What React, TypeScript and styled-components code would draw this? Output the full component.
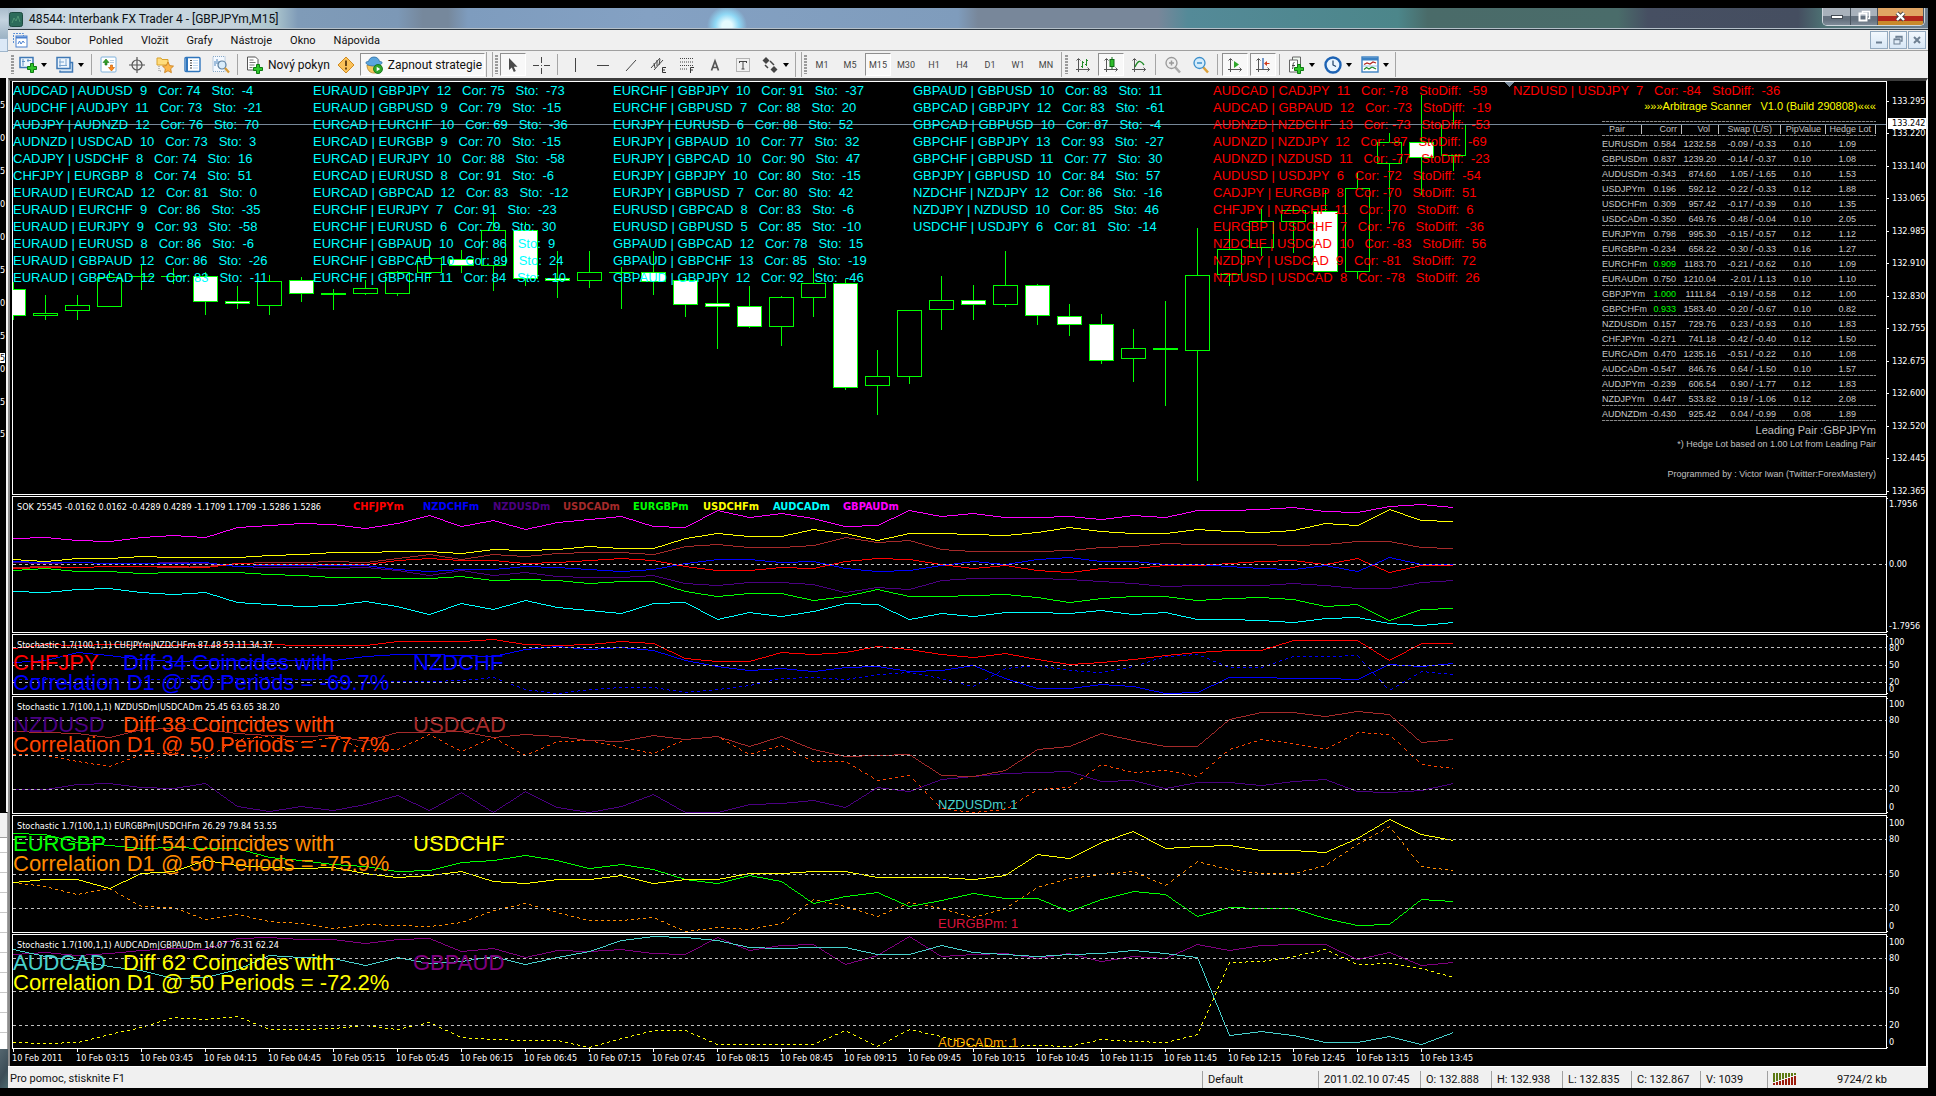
import React from "react";
import styled, { createGlobalStyle, css } from "styled-components";

const UI = `Roboto, "Open Sans", sans-serif`;
const ARIAL = `"Liberation Sans", Arial, sans-serif`;
const TAHOMA = `"DejaVu Sans Condensed", "DejaVu Sans", sans-serif`;

const GlobalStyle = createGlobalStyle`
  * { box-sizing: border-box; }
  html, body { margin: 0; padding: 0; background: #000; }
  button { font: inherit; color: inherit; margin: 0; padding: 0; border: 0; background: none; }
  svg { display: block; }
`;

/* ---------- frame ---------- */

const Desktop = styled.div`
  display: flex;
  height: 100vh;
  min-height: 700px;
  padding: 8px 8px 8px 0;
  background: #000;
  overflow: hidden;
  font: 11px/14px ${UI};
  color: #111;
`;

const Neighbour = styled.div`
  flex: none;
  width: 8px;
  display: flex;
  flex-direction: column;
  overflow: hidden;
  background: #f0f0f0;
`;

const NeighbourCaption = styled.div`
  height: 30px;
  background: linear-gradient(#a9bccb, #c4d3df 40%, #9db3c4);
`;

const NeighbourButton = styled.div`
  height: 14px;
  border: solid #9fb6cc;
  border-width: 1px 1px 1px 0;
  background: #dce9f7;
`;

const NeighbourBar = styled.div`
  height: 26px;
  background: #f0f0f0;
`;

const NeighbourScale = styled.div`
  position: relative;
  flex: 1;
  border-right: 2px solid #f4f4f4;
  background: #000;
  color: #fff;
  font: 9px/10px ${TAHOMA};
`;

const NeighbourDigit = styled.span<{ $y: number; $lit?: boolean }>`
  position: absolute;
  left: 0;
  top: ${(p) => p.$y}px;
  width: 5px;
  background: ${(p) => (p.$lit ? "#fff" : "transparent")};
  color: ${(p) => (p.$lit ? "#000" : "#fff")};
`;

const NeighbourList = styled.div`
  height: 237px;
  border-top: 1px solid #000;
  border-right: 1px solid #a0a0a0;
  background: linear-gradient(#f0f0f0 24px, #a0a0a0 24px 25px, transparent 25px),
    repeating-linear-gradient(#fff 0 19px, #c8c8c8 19px 20px);
`;

const NeighbourCorner = styled.div`
  height: 39px;
  background: linear-gradient(120deg, #54666f, #3b4d57 60%, #4c6b70);
`;

const Window = styled.main`
  flex: 1;
  min-width: 0;
  display: flex;
  flex-direction: column;
`;

/* ---------- caption ---------- */

const Caption = styled.header`
  flex: none;
  display: flex;
  align-items: flex-start;
  height: 22px;
  border-bottom: 1px solid #2e3a44;
  box-shadow: inset 0 -1px 0 #b5c0c9;
  background: radial-gradient(circle at 719px 18px, #e4fbff 0 5px, #8fd8f5 12px, transparent 20px),
    linear-gradient(
      90deg,
      #a9bccb 0,
      #cddbe3 40px,
      #c4d3dc 230px,
      #a9c3cc 268px,
      #7f9bb8 290px,
      #7c98b6 390px,
      #76889c 415px,
      #76889c 440px,
      #7e9cbe 460px,
      #84a1c3 640px,
      #7f9cbc 950px,
      #78879a 970px,
      #78879a 1150px,
      #548a98 1180px,
      #4c868a 1390px,
      #4a6b69 1420px,
      #4a6c6a 1610px,
      #464f62 1640px,
      #454e60 1790px,
      #4d7173 1815px,
      #6d7f90 100%
    );
`;

const AppIcon = styled.svg`
  margin: 4px 6px 0 1px;
`;

const Title = styled.h1`
  flex: 1;
  margin: 0;
  padding-top: 4px;
  font: 400 12px/14px ${UI};
  color: #0b1014;
`;

const CaptionButtons = styled.div`
  display: flex;
  margin-right: 3px;
  height: 18px;
  border: solid #cfd6dc;
  border-width: 0 1px 1px;
  border-radius: 0 0 5px 5px;
  overflow: hidden;
`;

const CaptionButton = styled.button<{ $width: number; $close?: boolean }>`
  width: ${(p) => p.$width}px;
  display: grid;
  place-items: center;
  border-right: 1px solid #49545f;
  background: ${(p) =>
    p.$close
      ? "linear-gradient(#e0a564 0 45%, #b3251c 45% 75%, #c98a2c 75%)"
      : "linear-gradient(#a8b1bb 0 45%, #66727f 45% 70%, #7f8b98)"};
`;

/* ---------- menu ---------- */

const MenuBar = styled.nav`
  flex: none;
  display: flex;
  align-items: center;
  height: 21px;
  padding: 0 2px 0 4px;
  border-bottom: 1px solid #a0a0a0;
  background: #f0f0f0;
`;

const MenuItems = styled.div`
  flex: 1;
  display: flex;
  gap: 18px;
  margin-left: 8px;
  padding-top: 1px;
`;

const MdiButtons = styled.div`
  display: flex;
  gap: 1px;
`;

const MdiButton = styled.button`
  width: 18px;
  height: 18px;
  display: grid;
  place-items: center;
  border: 1px solid #93a9bf;
  background: linear-gradient(#f2f8fe, #d8e7f6);
`;

/* ---------- toolbar ---------- */

const ToolBar = styled.div`
  flex: none;
  display: flex;
  align-items: center;
  height: 27px;
  padding-left: 3px;
  background: #f0f0f0;
`;

const Grip = styled.span<{ $lead?: boolean }>`
  flex: none;
  width: 3px;
  height: 19px;
  margin: 0 1px 0 ${(p) => (p.$lead ? 0 : 2)}px;
  background: repeating-linear-gradient(#9a9a9a 0 2px, transparent 2px 3px);
`;

const Divider = styled.span`
  flex: none;
  width: 1px;
  height: 21px;
  margin: 0 3px 0 2px;
  background: #a5a5a5;
`;

const BandEnd = styled.span<{ $double?: boolean }>`
  flex: none;
  width: ${(p) => (p.$double ? 7 : 2)}px;
  height: 25px;
  margin-left: 1px;
  border: solid #a5a5a5;
  border-width: 0 ${(p) => (p.$double ? 1 : 0)}px 0 1px;
`;

const pressed = css`
  border: 1px solid;
  border-color: #8f8f8f #fff #fff #8f8f8f;
  background: #f8f8f8;
`;

const Tool = styled.button<{ $on?: boolean }>`
  flex: none;
  width: 26px;
  height: 23px;
  margin: 0 1px;
  display: grid;
  place-items: center;
  color: #444;
  font: 9px/12px ${UI};
  ${(p) => p.$on && pressed}
`;

const DropTool = styled.button`
  flex: none;
  width: 37px;
  height: 23px;
  display: flex;
  align-items: center;
  gap: 4px;
  padding-left: 4px;
`;

const LabelTool = styled.button<{ $on?: boolean }>`
  flex: none;
  height: 23px;
  display: flex;
  align-items: center;
  gap: 5px;
  padding: 0 2px 0 4px;
  font-size: 12px;
  ${(p) => p.$on && pressed}
`;

/* ---------- chart window ---------- */

const ChartWindow = styled.section`
  flex: 1;
  min-height: 0;
  display: flex;
  flex-direction: column;
  padding-left: 2px;
  border: solid;
  border-width: 3px 2px 0 2px;
  border-color: #3c3c3c #f4f4f4 #3c3c3c #8c8c8c;
  background: #000;
  color: #fff;
`;

const Panes = styled.div`
  flex: 1;
  min-height: 0;
  display: grid;
  gap: 1px;
  grid-template-rows: 414fr 137fr 61fr 118fr 118fr 115fr;
`;

const Pane = styled.div`
  min-height: 0;
  display: grid;
  grid-template-columns: minmax(0, 1fr) 39px;
`;

const Plot = styled.div`
  position: relative;
  min-height: 0;
  border: 1px solid #fff;
  overflow: hidden;
`;

const Drawing = styled.svg`
  position: absolute;
  inset: 0;
  width: 100%;
  height: 100%;
`;

const Scale = styled.div<{ $ends?: boolean }>`
  position: relative;
  font: 9px/10px ${TAHOMA};
  ${(p) =>
    p.$ends &&
    css`
      &::before,
      &::after {
        content: "";
        position: absolute;
        left: 0;
        top: 2px;
        width: 1px;
        height: 1px;
        background: #fff;
      }
      &::after {
        top: auto;
        bottom: 1px;
      }
    `}
`;

const ScaleLabel = styled.span<{ $y: number; $tick?: boolean }>`
  position: absolute;
  top: ${(p) => p.$y - 5}px;
  left: 0;
  padding-left: ${(p) => (p.$tick ? 5 : 2)}px;
  &::before {
    content: "";
    position: absolute;
    left: 0;
    top: 5px;
    width: ${(p) => (p.$tick ? 2 : 0)}px;
    height: 1px;
    background: #fff;
  }
`;

const BidLabel = styled.span`
  position: absolute;
  top: 37px;
  left: 1px;
  right: 0;
  padding-left: 4px;
  background: #fff;
  color: #000;
  line-height: 11px;
`;

const Times = styled.div`
  flex: none;
  display: flex;
  height: 17px;
  overflow: hidden;
  font: 9px/11px ${TAHOMA};
`;

const Time = styled.span`
  flex: none;
  width: 64px;
  padding-top: 4px;
  white-space: nowrap;
  background: linear-gradient(#fff, #fff) 1px 0 / 1px 3px no-repeat;
`;

const PairColumns = styled.div`
  position: absolute;
  inset: 0 auto auto 0;
  display: grid;
  grid-auto-flow: column;
  grid-auto-columns: 300px;
  font: 13px/17px ${ARIAL};
  white-space: pre;
`;

const PairColumn = styled.div<{ $color: string }>`
  color: ${(p) => p.$color};
`;

const Scanner = styled.aside`
  position: absolute;
  top: 16px;
  right: 10px;
  width: 280px;
  color: #c0c0c0;
  font: 9px/14px ${ARIAL};
  text-align: right;
`;

const ScannerTitle = styled.h2`
  margin: 0 0 6px;
  font: 400 11px/17px ${ARIAL};
  color: #ff0;
  white-space: pre;
`;

const dashes = `repeating-linear-gradient(90deg, #8a8a8a 0 3px, #222 3px 4px)`;

const ScannerTable = styled.table`
  width: 274px;
  margin-left: auto;
  border-collapse: collapse;
  table-layout: fixed;
  background: ${dashes} top / 100% 1px no-repeat;
  th,
  td {
    height: 15px;
    padding: 0;
    font: 9px/14px ${ARIAL};
    white-space: nowrap;
    text-align: right;
  }
  tr {
    background: ${dashes} bottom / 100% 1px no-repeat;
  }
`;

const Col = styled.col<{ $w: number }>`
  width: ${(p) => p.$w}px;
`;

const Head = styled.th<{ $pad: number }>`
  && {
    padding-right: ${(p) => p.$pad}px;
  }
  position: relative;
  &::after {
    content: "";
    position: absolute;
    right: 0;
    top: 4px;
    width: 1px;
    height: 9px;
    background: #c0c0c0;
  }
`;

const Cell = styled.td<{ $pad?: number; $high?: boolean }>`
  && {
    padding-right: ${(p) => p.$pad ?? 0}px;
    color: ${(p) => (p.$high ? "#00ff00" : "#c8c8c8")};
  }
`;

const Leading = styled.p`
  margin: 2px 0 0;
  font: 11px/14px ${ARIAL};
`;

const Note = styled.p<{ $far?: boolean }>`
  margin: ${(p) => (p.$far ? 16 : 0)}px 0 0;
  white-space: nowrap;
`;

const PaneCaption = styled.div`
  position: absolute;
  left: 4px;
  top: 5px;
  display: flex;
  font: 9px/11px ${TAHOMA};
  white-space: nowrap;
`;

const Legend = styled.div`
  position: absolute;
  left: 340px;
  top: 3px;
  display: grid;
  grid-auto-flow: column;
  grid-auto-columns: 70px;
  font: bold 11px/13px ${TAHOMA};
`;

const Ink = styled.span<{ $color: string }>`
  color: ${(p) => p.$color};
`;

const Signal = styled.div`
  position: absolute;
  left: 0;
  top: 18px;
  display: grid;
  grid-template-columns: 110px 290px auto;
  font: 22px/20px ${ARIAL};
  white-space: nowrap;
`;

const SignalLine = styled.span<{ $color: string }>`
  grid-column: 1 / -1;
  color: ${(p) => p.$color};
`;

const Count = styled.span<{ $color: string }>`
  position: absolute;
  left: 925px;
  top: 100px;
  font: 13px/16px ${ARIAL};
  color: ${(p) => p.$color};
`;

/* ---------- status bar ---------- */

const StatusBar = styled.footer`
  flex: none;
  display: flex;
  align-items: center;
  height: 22px;
  padding: 3px 0 0 2px;
  background: #f0f0f0;
  border-top: 1px solid #fff;
`;

const StatusText = styled.span`
  flex: 1;
`;

const StatusCell = styled.span<{ $w: number }>`
  flex: none;
  width: ${(p) => p.$w}px;
  padding-left: 5px;
  border-left: 1px solid #a0a0a0;
  line-height: 17px;
`;

const Traffic = styled.span`
  flex: none;
  display: flex;
  align-items: center;
  justify-content: space-between;
  width: 161px;
  padding: 0 41px 0 5px;
  border-left: 1px solid #a0a0a0;
  line-height: 17px;
`;

/* ---------- data ---------- */

const BAR = 32;

// Ordinates below are kept at three units per pixel; `origin` is the ordinate of the pane's top edge.
const toPixel = (v: number, origin: number) => Math.floor((v - origin) / 3);

// Walks the line pixel by pixel and joins neighbours of equal height into horizontal runs.
const trace = (data: number[], origin: number, dotted?: boolean) => {
  const ys = data.map((v) => toPixel(v, origin));
  let path = "";
  let startX = 0;
  let endX = -1;
  let rowY = 0;
  let count = 0;
  const flush = () => {
    if (endX >= startX) path += `M${startX} ${rowY + 0.5}h${endX - startX + 1}`;
    endX = startX - 1;
  };
  for (let i = 0; i < ys.length - 1; i++) {
    const dy = ys[i + 1] - ys[i];
    const steps = Math.max(BAR, Math.abs(dy));
    for (let s = 0; s < steps; s++, count++) {
      const x = i * BAR + Math.round((s * BAR) / steps);
      const y = ys[i] + Math.round((s * dy) / steps);
      if (dotted && count % 6 >= 3) {
        flush();
        continue;
      }
      if (endX >= startX && y === rowY && x <= endX + 1) {
        endX = x;
      } else {
        flush();
        startX = x;
        endX = x;
        rowY = y;
      }
    }
  }
  flush();
  return path;
};

// body top, body bottom, wick top, wick bottom, filled
const candles: number[][] = [
  [628, 706, 608, 720, 1], [700, 707, 645, 720, 0], [676, 692, 645, 720, 0], [592, 680, 573, 680, 0],
  [590, 590, 552, 630, 0], [590, 590, 564, 612, 0], [590, 665, 577, 705, 1], [664, 671, 620, 687, 1],
  [604, 677, 587, 705, 0], [601, 641, 591, 666, 1], [640, 644, 627, 690, 0], [625, 641, 600, 645, 0],
  [577, 641, 573, 648, 0], [535, 577, 502, 606, 0], [538, 556, 510, 579, 1], [451, 556, 402, 633, 0],
  [451, 596, 427, 618, 1], [595, 602, 513, 655, 1], [577, 602, 513, 624, 0], [577, 577, 561, 687, 0],
  [577, 605, 513, 645, 1], [601, 674, 590, 711, 1], [670, 680, 600, 807, 1], [679, 740, 618, 744, 1],
  [652, 740, 648, 798, 0], [610, 653, 564, 711, 0], [610, 923, 598, 930, 1], [889, 916, 810, 1005, 0],
  [691, 889, 691, 912, 0], [661, 689, 588, 750, 0], [661, 674, 615, 720, 1], [616, 674, 513, 681, 0],
  [616, 707, 612, 735, 1], [709, 734, 672, 768, 1], [733, 842, 702, 852, 1], [805, 836, 747, 907, 0],
  [805, 808, 663, 978, 0], [586, 812, 444, 1203, 0], [508, 583, 446, 618, 0], [424, 502, 387, 528, 0],
  [391, 424, 375, 519, 0], [394, 574, 330, 574, 1], [325, 574, 280, 597, 0], [187, 250, 159, 432, 0],
  [187, 232, 45, 345, 1], [133, 226, 90, 273, 0],
];

const mirror = (s: number[], sum: number) => s.map((v) => sum - v);
const spread = (a: number[], b: number[], zero: number) => a.map((v, i) => zero - Math.abs(v - b[i]));

const gbpaud = [175,172,181,184,172,166,172,143,136,130,134,145,129,106,139,121,149,128,119,109,139,142,90,112,100,115,139,136,91,109,100,112,112,109,118,106,112,91,91,88,82,94,97,79,73,82];
const usdchf = [238,244,235,235,230,232,232,232,227,223,217,217,214,214,220,208,211,208,199,205,205,176,160,169,169,149,160,182,160,160,163,166,157,142,154,160,160,148,154,157,151,130,136,88,121,125];
const usdcad = [262,259,262,259,259,262,259,250,247,247,244,247,236,223,238,223,230,220,217,217,223,199,193,202,202,195,172,187,181,208,214,214,214,211,203,199,190,193,193,193,197,193,184,184,202,206];
const chfjpy = [265,262,262,259,259,259,262,250,253,253,253,253,241,235,241,241,250,247,241,235,241,259,271,271,262,265,244,235,238,254,265,256,271,277,265,265,256,256,250,244,241,253,235,278,257,256];

const s1a = [505,492,496,494,497,496,496,494,493,496,496,496,484,484,484,478,493,496,493,484,490,535,545,545,517,523,517,499,508,523,532,520,539,553,547,538,526,518,511,511,482,482,482,541,490,490];
const s1b = [547,541,517,526,538,543,540,540,543,540,540,529,523,523,526,529,508,499,508,503,511,541,559,571,565,574,562,559,574,571,556,596,625,625,613,620,640,637,592,592,595,595,599,553,559,550];
const s2a = [754,757,760,772,748,745,748,760,766,769,766,784,757,757,754,772,763,769,780,785,766,778,769,799,769,808,829,826,823,886,889,871,808,799,760,781,799,799,719,697,697,709,694,704,787,778];
const s2b = [928,928,913,910,922,925,910,978,995,979,991,972,946,992,937,997,934,982,997,979,943,997,997,973,970,961,982,922,934,898,889,880,877,875,904,901,925,907,907,916,904,898,934,937,931,910];
const s3a = [130,133,157,166,175,172,175,176,202,211,223,229,244,241,217,211,196,211,235,223,238,268,280,256,274,340,319,307,349,331,310,325,325,364,328,304,314,379,352,355,355,385,407,403,328,334];
const s3b = [277,268,268,296,250,244,211,226,232,234,232,250,262,256,244,274,280,268,268,256,280,268,268,250,250,244,244,262,262,262,268,256,193,205,157,124,175,169,166,181,181,187,145,88,133,151];
const s4a = [478,499,510,530,541,565,562,537,496,502,505,526,502,520,514,499,523,502,484,451,439,442,451,472,474,472,472,493,493,466,487,493,499,493,490,481,490,502,736,724,736,757,757,739,763,727];
const s4b = [493,487,496,490,480,475,478,445,442,448,448,460,448,445,484,475,502,481,484,478,490,493,442,481,466,463,523,496,439,499,493,490,504,490,514,499,505,463,481,466,463,463,508,487,526,517];

type Line = { color: string; data: number[]; dotted?: boolean };
type Mark = [string, number];

interface Study {
  name: string;
  caption: string;
  origin: number;
  levels: number[];
  lines: Line[];
  marks: Mark[];
  left?: [string, string];
  right?: [string, string];
  diff?: [string, string, string];
  count?: [string, string];
}

const studies: Study[] = [
  {
    name: "SOK",
    caption: "SOK 25545 -0.0162 0.0162 -0.4289 0.4289 -1.1709 1.1709 -1.5286 1.5286",
    origin: 51,
    levels: [253],
    lines: [
      { color: "#ff00ff", data: gbpaud },
      { color: "#00ffff", data: mirror(gbpaud, 509) },
      { color: "#ffff00", data: usdchf },
      { color: "#00ff00", data: mirror(usdchf, 509) },
      { color: "#4b0082", data: mirror(usdcad, 508) },
      { color: "#a52a2a", data: usdcad },
      { color: "#0000ff", data: mirror(chfjpy, 509) },
      { color: "#ff0000", data: chfjpy },
    ],
    marks: [["1.7956", 8], ["0.00", 68], ["-1.7956", 130]],
  },
  {
    name: "CHFJPY NZDCHF",
    caption: "Stochastic 1.7(100,1,1) CHFJPYm|NZDCHFm 87.48 53.11 34.37",
    origin: 465,
    levels: [502, 556, 607],
    lines: [
      { color: "#0000ff", data: spread(s1a, s1b, 642), dotted: true },
      { color: "#0000ff", data: s1b },
      { color: "#ff0000", data: s1a },
    ],
    marks: [["100", 8], ["80", 14], ["50", 31], ["20", 48], ["0", 55]],
    left: ["CHFJPY", "#ff0000"],
    right: ["NZDCHF", "#0000ff"],
    diff: ["Diff 34 Coincides with", "Correlation D1 @ 50 Periods = -69.7%", "#0000ff"],
  },
  {
    name: "NZDUSD USDCAD",
    caption: "Stochastic 1.7(100,1,1) NZDUSDm|USDCADm 25.45 63.65 38.20",
    origin: 651,
    levels: [721, 826, 928],
    lines: [
      { color: "#ff4500", data: spread(s2a, s2b, 997), dotted: true },
      { color: "#4b0082", data: s2b },
      { color: "#a52a2a", data: s2a },
    ],
    marks: [["100", 8], ["80", 24], ["50", 59], ["20", 93], ["0", 111]],
    left: ["NZDUSD", "#4b0082"],
    right: ["USDCAD", "#a52a2a"],
    diff: ["Diff 38 Coincides with", "Correlation D1 @ 50 Periods = -77.7%", "#ff4500"],
    count: ["NZDUSDm: 1", "#48d1cc"],
  },
  {
    name: "EURGBP USDCHF",
    caption: "Stochastic 1.7(100,1,1) EURGBPm|USDCHFm 26.29 79.84 53.55",
    origin: 78,
    levels: [148, 253, 355],
    lines: [
      { color: "#ff8c00", data: spread(s3a, s3b, 424), dotted: true },
      { color: "#00ff00", data: s3a },
      { color: "#ffff00", data: s3b },
    ],
    marks: [["100", 8], ["80", 24], ["50", 59], ["20", 93], ["0", 111]],
    left: ["EURGBP", "#00ff00"],
    right: ["USDCHF", "#ffff00"],
    diff: ["Diff 54 Coincides with", "Correlation D1 @ 50 Periods = -75.9%", "#ff8c00"],
    count: ["EURGBPm: 1", "#dc143c"],
  },
  {
    name: "AUDCAD GBPAUD",
    caption: "Stochastic 1.7(100,1,1) AUDCADm|GBPAUDm 14.07 76.31 62.24",
    origin: 435,
    levels: [505, 604, 706],
    lines: [
      { color: "#ffff00", data: spread(s4a, s4b, 772), dotted: true },
      { color: "#800080", data: s4b },
      { color: "#48d1cc", data: s4a },
    ],
    marks: [["100", 8], ["80", 24], ["50", 57], ["20", 91], ["0", 108]],
    left: ["AUDCAD", "#48d1cc"],
    right: ["GBPAUD", "#800080"],
    diff: ["Diff 62 Coincides with", "Correlation D1 @ 50 Periods = -72.2%", "#ffff00"],
    count: ["AUDCADm: 1", "#ffa500"],
  },
];

const legend: [string, string][] = [
  ["CHFJPYm", "#ff0000"], ["NZDCHFm", "#0000ff"], ["NZDUSDm", "#4b0082"], ["USDCADm", "#a52a2a"],
  ["EURGBPm", "#00ff00"], ["USDCHFm", "#ffff00"], ["AUDCADm", "#00ffff"], ["GBPAUDm", "#ff00ff"],
];

const prices: Mark[] = [
  ["133.295", 20], ["133.220", 52], ["133.140", 85], ["133.065", 117], ["132.985", 150], ["132.910", 182],
  ["132.830", 215], ["132.755", 247], ["132.675", 280], ["132.600", 312], ["132.520", 345], ["132.445", 377],
  ["132.365", 410],
];

// first symbol, second symbol, periods, correlation, stochastic
const matched: string[][] = [
  [
    "AUDCAD AUDUSD 9 74 -4", "AUDCHF AUDJPY 11 73 -21", "AUDJPY AUDNZD 12 76 70", "AUDNZD USDCAD 10 73 3",
    "CADJPY USDCHF 8 74 16", "CHFJPY EURGBP 8 74 51", "EURAUD EURCAD 12 81 0", "EURAUD EURCHF 9 86 -35",
    "EURAUD EURJPY 9 93 -58", "EURAUD EURUSD 8 86 -6", "EURAUD GBPAUD 12 86 -26", "EURAUD GBPCAD 12 83 -11",
  ],
  [
    "EURAUD GBPJPY 12 75 -73", "EURAUD GBPUSD 9 79 -15", "EURCAD EURCHF 10 69 -36", "EURCAD EURGBP 9 70 -15",
    "EURCAD EURJPY 10 88 -58", "EURCAD EURUSD 8 91 -6", "EURCAD GBPCAD 12 83 -12", "EURCHF EURJPY 7 91 -23",
    "EURCHF EURUSD 6 79 30", "EURCHF GBPAUD 10 86 9", "EURCHF GBPCAD 10 89 24", "EURCHF GBPCHF 11 84 -10",
  ],
  [
    "EURCHF GBPJPY 10 91 -37", "EURCHF GBPUSD 7 88 20", "EURJPY EURUSD 6 88 52", "EURJPY GBPAUD 10 77 32",
    "EURJPY GBPCAD 10 90 47", "EURJPY GBPJPY 10 80 -15", "EURJPY GBPUSD 7 80 42", "EURUSD GBPCAD 8 83 -6",
    "EURUSD GBPUSD 5 85 -10", "GBPAUD GBPCAD 12 78 15", "GBPAUD GBPCHF 13 85 -19", "GBPAUD GBPJPY 12 92 -46",
  ],
  [
    "GBPAUD GBPUSD 10 83 11", "GBPCAD GBPJPY 12 83 -61", "GBPCAD GBPUSD 10 87 -4", "GBPCHF GBPJPY 13 93 -27",
    "GBPCHF GBPUSD 11 77 30", "GBPJPY GBPUSD 10 84 57", "NZDCHF NZDJPY 12 86 -16", "NZDJPY NZDUSD 10 85 46",
    "USDCHF USDJPY 6 81 -14",
  ],
];

const opposed: string[][] = [
  [
    "AUDCAD CADJPY 11 -78 -59", "AUDCAD GBPAUD 12 -73 -19", "AUDNZD NZDCHF 13 -73 -53", "AUDNZD NZDJPY 12 -87 -69",
    "AUDNZD NZDUSD 11 -77 -23", "AUDUSD USDJPY 6 -72 -54", "CADJPY EURGBP 8 -70 51", "CHFJPY NZDCHF 11 -70 6",
    "EURGBP USDCHF 7 -76 -36", "NZDCHF USDCAD 10 -83 56", "NZDJPY USDCAD 9 -81 72", "NZDUSD USDCAD 8 -78 26",
  ],
  ["NZDUSD USDJPY 7 -84 -36"],
];

const scanner = [
  "EURUSDm,0.584,1232.58,-0.09 / -0.33,0.10,1.09", "GBPUSDm,0.837,1239.20,-0.14 / -0.37,0.10,1.08",
  "AUDUSDm,-0.343,874.60,1.05 / -1.65,0.10,1.53", "USDJPYm,0.196,592.12,-0.22 / -0.33,0.12,1.88",
  "USDCHFm,0.309,957.42,-0.17 / -0.39,0.10,1.35", "USDCADm,-0.350,649.76,-0.48 / -0.04,0.10,2.05",
  "EURJPYm,0.798,995.30,-0.15 / -0.57,0.12,1.12", "EURGBPm,-0.234,658.22,-0.30 / -0.33,0.16,1.27",
  "EURCHFm,0.909,1183.70,-0.21 / -0.62,0.10,1.09", "EURAUDm,0.750,1210.04,-2.01 / 1.13,0.10,1.10",
  "GBPJPYm,1.000,1111.84,-0.19 / -0.58,0.12,1.00", "GBPCHFm,0.933,1583.40,-0.20 / -0.67,0.10,0.82",
  "NZDUSDm,0.157,729.76,0.23 / -0.93,0.10,1.83", "CHFJPYm,-0.271,741.18,-0.42 / -0.40,0.12,1.50",
  "EURCADm,0.470,1235.16,-0.51 / -0.22,0.10,1.08", "AUDCADm,-0.547,846.76,0.64 / -1.50,0.10,1.57",
  "AUDJPYm,-0.239,606.54,0.90 / -1.77,0.12,1.83", "NZDJPYm,0.447,533.82,0.19 / -1.06,0.12,2.08",
  "AUDNZDm,-0.430,925.42,0.04 / -0.99,0.08,1.89",
].map((r) => r.split(","));

const times = ["10 Feb 2011"].concat(
  Array.from({ length: 22 }, (_, k) => {
    const m = 195 + k * 30;
    return `10 Feb ${String(Math.floor(m / 60)).padStart(2, "0")}:${String(m % 60).padStart(2, "0")}`;
  })
);

/* ---------- icons ---------- */

const Icon = ({ children, size = 18 }: { children: React.ReactNode; size?: number }) => (
  <svg width={size} height={size} viewBox="0 0 18 18" fill="none" aria-hidden="true">
    {children}
  </svg>
);

const Caret = () => (
  <svg width="6" height="4" viewBox="0 0 6 4" aria-hidden="true">
    <path d="M0 0h6L3 4z" fill="#000" />
  </svg>
);

const Plus = ({ x, y }: { x: number; y: number }) => (
  <path
    transform={`translate(${x} ${y})`}
    d="M3.5 .5h3v3h3v3h-3v3h-3v-3h-3v-3h3z"
    fill="#2fc52a"
    stroke="#0d7a12"
  />
);

const NewChart = () => (
  <Icon>
    <rect x="1" y="1.500" width="13" height="10" fill="#eef6fd" stroke="#3f78b5" strokeWidth="1.500" />
    <path d="M4 3v7M3 5.500h3M9 3v3M8 4.500h4" stroke="#5e91c4" />
    <Plus x={8} y={7} />
  </Icon>
);

const Profiles = () => (
  <Icon>
    <path d="M4 14.500V16h12.500V6.500H14" stroke="#3f78b5" strokeWidth="1.500" fill="#d6e7f6" />
    <rect x="1" y="1.500" width="13" height="11" fill="#eef6fd" stroke="#3f78b5" strokeWidth="1.500" />
    <path d="M4 3v8M3 9.500h8M10 3v6M3 6h5" stroke="#7ba6d1" />
  </Icon>
);

const MarketWatch = () => (
  <Icon>
    <rect x="1" y="1" width="15" height="15" rx="1" fill="#fff" stroke="#7fb2dc" />
    <path d="M6 3l3 3.500H7V9H5V6.500H3z" fill="#33a02c" stroke="#1d7318" strokeWidth=".6" />
    <path d="M11.500 15l-3-3.500h2V9h2v2.500h2z" fill="#ff8a1e" stroke="#c35a00" strokeWidth=".6" />
    <path d="M10 4.500h4M10 6.500h4" stroke="#b8cfe2" />
  </Icon>
);

const Target = () => (
  <Icon>
    <circle cx="9" cy="9" r="5" stroke="#555" strokeWidth="1.200" />
    <path d="M9 1v16M1 9h16" stroke="#555" strokeWidth="1.200" />
  </Icon>
);

const Star = () => (
  <Icon>
    <path d="M1 2h4l1 1.500h6V9H1z" fill="#ffdc7c" stroke="#d9a22c" />
    <path d="M3 10v5h3" stroke="#888" strokeDasharray="1 1" />
    <path d="M12 6l1.700 3.600 3.800.5-2.800 2.700.7 3.900L12 14.800 8.600 16.700l.7-3.900L6.500 10.100l3.800-.5z" fill="#fdb64a" stroke="#c87b14" strokeWidth=".8" />
  </Icon>
);

const DataWindow = () => (
  <Icon>
    <rect x="1" y="1.500" width="15" height="14" rx="1" fill="#fff" stroke="#2f76bd" strokeWidth="1.400" />
    <path d="M3 2v13" stroke="#2f76bd" strokeWidth="2" />
    <path d="M6 4.500h2M6 7h2M6 9.500h2M6 12h2" stroke="#444" />
    <path d="M9 4.500h5M9 7h5M9 9.500h5M9 12h5" stroke="#b9d5ee" />
  </Icon>
);

const Tester = () => (
  <Icon>
    <rect x="1" y=".5" width="12" height="15" fill="#f4f9ff" stroke="#86a9c9" strokeDasharray="1 1" />
    <path d="M3 5v5M5 3v5M7 5v4" stroke="#4f86bd" />
    <circle cx="10" cy="9" r="4" fill="#d7ebfb" fillOpacity=".9" stroke="#5c7f9f" strokeWidth="1.200" />
    <path d="M13 12l4 4.500" stroke="#d79a35" strokeWidth="2.200" />
  </Icon>
);

const NewOrder = () => (
  <Icon>
    <path d="M2.500 1h8l2.500 2.500V14H2.500z" fill="#fff" stroke="#555" />
    <path d="M4.500 4h4M4.500 6.500h6M4.500 9h5M4.500 11.500h3" stroke="#777" />
    <Plus x={8} y={8} />
  </Icon>
);

const Warning = () => (
  <Icon>
    <path d="M9 1l8 8-8 8-8-8z" fill="#fbc25a" stroke="#cf8a1f" />
    <path d="M9 4.500v5.500M9 11.500v2" stroke="#5a3a10" strokeWidth="1.800" />
  </Icon>
);

const Expert = () => (
  <Icon>
    <path d="M2 9c0 5 3 8 7 8s7-3 7-8z" fill="#f6c65b" stroke="#b4852a" strokeWidth=".8" />
    <path d="M1 6.500C1 8.800 4.500 10 9 10s8-1.200 8-3.500c0-.9-1.500-1-2.500-1C14 3 12 1 9 1S4 3 3.500 5.500c-1 0-2.500.1-2.500 1z" fill="#5aa5dd" stroke="#2c6da3" strokeWidth=".8" />
    <circle cx="13" cy="13" r="4.500" fill="#2fa72b" stroke="#0c6c10" strokeWidth=".8" />
    <path d="M11.700 10.800l3.500 2.200-3.500 2.200z" fill="#fff" />
  </Icon>
);

const Cursor = () => (
  <Icon>
    <path d="M5 2v12l2.800-2.600 2 4.600 2-.9-2-4.400h3.700z" fill="#4a4a4a" />
  </Icon>
);

const lines: Record<string, React.ReactNode> = {
  cross: <path d="M9.500 1v6M9.500 12v6M1 9.500h6M12 9.500h6M9 9.500h1" stroke="#444" />,
  vline: <path d="M9.500 2v14" stroke="#444" />,
  hline: <path d="M3 9.500h12" stroke="#444" />,
  slash: <path d="M4 15L14 4" stroke="#444" />,
  channel: (
    <>
      <path d="M1 12L10 2M4 14l9-10M4 7l1 5M7 4l0 6M10 3l-1 6" stroke="#444" />
      <path d="M16 11.500h-3.500v5H16M12.500 14H15" stroke="#333" />
    </>
  ),
  fibo: (
    <>
      <path d="M2 2.500h13M2 6h13M2 9.500h13M2 13h8" stroke="#444" strokeDasharray="1 1" />
      <path d="M16 11.500h-3.500V17M12.500 14H15" stroke="#333" />
    </>
  ),
  arrows: (
    <>
      <path d="M5 1l3.500 3.500L5 8 1.500 4.500z" fill="#444" />
      <path d="M13 10l3.500 3.500L13 17l-3.500-3.500z" fill="#444" />
      <path d="M4 9l3 3M9 5l4 4" stroke="#444" strokeWidth="1.500" />
    </>
  ),
};

const AxisIcon = ({ children }: { children: React.ReactNode }) => (
  <Icon>
    <path d="M4.500 3v13M2 13.500h13.500M2.500 4.500l2-2 2 2M13.500 11.500l2 2-2 2" stroke="#555" />
    {children}
  </Icon>
);

const Magnifier = ({ sign, color, handle }: { sign: string; color: string; handle: string }) => (
  <Icon>
    <path d="M11 11l5 5.500" stroke={handle} strokeWidth="2.600" />
    <circle cx="7.500" cy="7" r="5.500" fill={color === "#999" ? "#eee" : "#d4ecfb"} stroke={color} strokeWidth="1.300" />
    <path d={sign} stroke={color} strokeWidth="1.500" />
  </Icon>
);

const Clock = () => (
  <Icon>
    <circle cx="9" cy="9" r="7.500" fill="#e9f4fd" stroke="#1d63b4" strokeWidth="2.400" />
    <path d="M9 4.500V9l3 1.500" stroke="#1c3f66" strokeWidth="1.200" />
  </Icon>
);

const Indicators = () => (
  <Icon>
    <rect x="1" y="1" width="16" height="15" fill="#fff" stroke="#3c82c4" strokeWidth="1.400" />
    <path d="M1 3h16" stroke="#3c82c4" strokeWidth="3" />
    <path d="M3 8.500l3-1.500 3 1 3-2 3 1" stroke="#b3261e" strokeWidth="1.200" />
    <path d="M3 13.500l2.500-2 2.500 1.500 3-2 4 2" stroke="#1f8a26" strokeWidth="1.200" />
    <path d="M2 10h14" stroke="#9cc3e6" />
  </Icon>
);

/* ---------- parts ---------- */

const pairRow = (row: string, label: string) => {
  const [a, b, n, cor, sto] = row.split(" ");
  return `${a} | ${b}  ${n}   Cor: ${cor}   ${label}:  ${sto}`;
};

const Candles = () => (
  <Drawing shapeRendering="crispEdges" role="img" aria-label="GBPJPYm M15">
    {candles.map(([top, bottom, high, low, filled], i) => {
      const x = i * BAR + 0.5;
      const t = toPixel(top, 6);
      const b = toPixel(bottom, 6);
      return (
        <g key={i} stroke="#00ff00">
          <line x1={x} x2={x} y1={toPixel(high, 6)} y2={toPixel(low, 6)} />
          {b === t ? (
            <line x1={x - 12.5} x2={x + 12.5} y1={t + 0.5} y2={t + 0.5} />
          ) : (
            <rect x={x - 12} y={t + 0.5} width={24} height={b - t} fill={filled ? "#fff" : "#000"} />
          )}
        </g>
      );
    })}
    <line x1="0" x2="100%" y1="42.500" y2="42.500" stroke="#778899" />
    <path d="M1491 0h10l-5 5z" fill="#778899" />
  </Drawing>
);

const StudyDrawing = ({ study }: { study: Study }) => (
  <Drawing shapeRendering="crispEdges" role="img" aria-label={study.name}>
    {study.lines.map((l, i) => (
      <path key={i} fill="none" stroke={l.color} d={trace(l.data, study.origin, l.dotted)} />
    ))}
    {study.levels.map((v) => {
      const y = toPixel(v, study.origin) + 0.5;
      return <line key={v} x1="0" x2="100%" y1={y} y2={y} stroke="#c0c0c0" strokeDasharray="3 3" />;
    })}
  </Drawing>
);

const StudyPane = ({ study }: { study: Study }) => (
  <Pane>
    <Plot>
      <StudyDrawing study={study} />
      <PaneCaption>{study.caption}</PaneCaption>
      {!study.left && (
        <Legend>
          {legend.map(([t, c]) => (
            <Ink key={t} $color={c}>{t}</Ink>
          ))}
        </Legend>
      )}
      {study.left && study.right && study.diff && (
        <Signal>
          <Ink $color={study.left[1]}>{study.left[0]}</Ink>
          <Ink $color={study.diff[2]}>{study.diff[0]}</Ink>
          <Ink $color={study.right[1]}>{study.right[0]}</Ink>
          <SignalLine $color={study.diff[2]}>{study.diff[1]}</SignalLine>
        </Signal>
      )}
      {study.count && <Count $color={study.count[1]}>{study.count[0]}</Count>}
    </Plot>
    <Scale $ends>
      {study.marks.map(([t, y]) => (
        <ScaleLabel key={t} $y={y}>{t}</ScaleLabel>
      ))}
    </Scale>
  </Pane>
);

const ScannerPanel = () => (
  <Scanner>
    <ScannerTitle>{"»»»Arbitrage Scanner   V1.0 (Build 290808)«««"}</ScannerTitle>
    <ScannerTable>
      <colgroup>
        <Col $w={40} /><Col $w={40} /><Col $w={37} /><Col $w={62} /><Col $w={45} /><Col $w={50} />
      </colgroup>
      <thead>
        <tr>
          <Head $pad={17}>Pair</Head>
          <Head $pad={5}>Corr</Head>
          <Head $pad={9}>Vol</Head>
          <Head $pad={9}>Swap (L/S)</Head>
          <Head $pad={5}>PipValue</Head>
          <Head $pad={5}>Hedge Lot</Head>
        </tr>
      </thead>
      <tbody>
        {scanner.map(([pair, corr, vol, swap, pip, lot]) => (
          <tr key={pair}>
            <Cell>{pair}</Cell>
            <Cell $pad={6} $high={Number(corr) > 0.9}>{corr}</Cell>
            <Cell $pad={3}>{vol}</Cell>
            <Cell $pad={5}>{swap}</Cell>
            <Cell $pad={15}>{pip}</Cell>
            <Cell $pad={20}>{lot}</Cell>
          </tr>
        ))}
      </tbody>
    </ScannerTable>
    <Leading>Leading Pair :GBPJPYm</Leading>
    <Note>*) Hedge Lot based on 1.00 Lot from Leading Pair</Note>
    <Note $far>Programmed by : Victor Iwan (Twitter:ForexMastery)</Note>
  </Scanner>
);

const neighbourDigits: [string, number, boolean?][] = [
  ["5", 22], ["0", 55], ["5", 88], ["0", 121], ["0", 154], ["5", 187], ["0", 220], ["5", 253],
  ["5", 275, true], ["0", 286], ["5", 319], ["5", 351],
];

export default function App() {
  return (
    <>
      <GlobalStyle />
      <Desktop>
        <Neighbour aria-hidden="true">
          <NeighbourCaption />
          <NeighbourButton />
          <NeighbourBar />
          <NeighbourScale>
            {neighbourDigits.map(([d, y, lit]) => (
              <NeighbourDigit key={y} $y={y} $lit={lit}>{d}</NeighbourDigit>
            ))}
          </NeighbourScale>
          <NeighbourList />
          <NeighbourCorner />
        </Neighbour>
        <Window>
          <Caption>
            <AppIcon width="14" height="15" viewBox="0 0 14 15" aria-hidden="true">
              <rect x=".5" y=".5" width="13" height="14" rx="2" fill="#2c6b5a" stroke="#1d4a40" />
              <path d="M3 11l2-5 2 3 2-5 2 6" stroke="#4f9474" fill="none" />
            </AppIcon>
            <Title>48544: Interbank FX Trader 4 - [GBPJPYm,M15]</Title>
            <CaptionButtons>
              <CaptionButton $width={28} aria-label="Minimize">
                <svg width="12" height="6"><rect x=".5" y="1.500" width="11" height="3" fill="#fff" stroke="#444c55" /></svg>
              </CaptionButton>
              <CaptionButton $width={27} aria-label="Restore">
                <svg width="13" height="13" fill="none">
                  <path d="M4.500 3V1.500h7v7H10" stroke="#fff" strokeWidth="1.500" />
                  <rect x="1.500" y="3.500" width="7" height="7" stroke="#fff" strokeWidth="2" />
                </svg>
              </CaptionButton>
              <CaptionButton $width={46} $close aria-label="Close">
                <svg width="13" height="11"><path d="M3 2l7 7M10 2L3 9" stroke="#444" strokeWidth="4" /><path d="M3 2l7 7M10 2L3 9" stroke="#fff" strokeWidth="2.400" /></svg>
              </CaptionButton>
            </CaptionButtons>
          </Caption>

          <MenuBar>
            <svg width="16" height="16" fill="none" aria-hidden="true">
              <path d="M1.500 11V1.500h10V4" stroke="#5b8fd6" strokeDasharray="2 1" />
              <rect x="4" y="4" width="11" height="11" fill="#fff" stroke="#4a80cf" />
              <path d="M4 5.500h11" stroke="#4a80cf" strokeWidth="2" />
              <path d="M6 12l1.500-3L9 12l2-3 1.500 2" stroke="#4a80cf" />
            </svg>
            <MenuItems>
              {["Soubor", "Pohled", "Vložit", "Grafy", "Nástroje", "Okno", "Nápovìda"].map((m) => (
                <button key={m}>{m}</button>
              ))}
            </MenuItems>
            <MdiButtons>
              <MdiButton aria-label="Minimize chart"><svg width="8" height="8"><path d="M1 6.500h6" stroke="#6d7f92" strokeWidth="2" /></svg></MdiButton>
              <MdiButton aria-label="Restore chart">
                <svg width="10" height="10" fill="none"><path d="M3 3V1.500h6V6H7.500M3 2h6M1 4.500h6" stroke="#6d7f92" strokeWidth="1.300" /><rect x="1" y="4" width="6" height="5" stroke="#6d7f92" /></svg>
              </MdiButton>
              <MdiButton aria-label="Close chart"><svg width="8" height="8"><path d="M1 1l6 6M7 1L1 7" stroke="#6d7f92" strokeWidth="2" /></svg></MdiButton>
            </MdiButtons>
          </MenuBar>

          <ToolBar role="toolbar">
            <Grip $lead />
            <DropTool aria-label="New chart"><NewChart /><Caret /></DropTool>
            <DropTool aria-label="Profiles"><Profiles /><Caret /></DropTool>
            <Divider />
            <Tool aria-label="Market watch"><MarketWatch /></Tool>
            <Tool aria-label="Data window"><Target /></Tool>
            <Tool aria-label="Navigator"><Star /></Tool>
            <Tool aria-label="Terminal"><DataWindow /></Tool>
            <Tool aria-label="Tester"><Tester /></Tool>
            <Divider />
            <LabelTool><NewOrder />Nový pokyn</LabelTool>
            <Tool aria-label="MetaEditor"><Warning /></Tool>
            <LabelTool $on><Expert />Zapnout strategie</LabelTool>
            <BandEnd $double />
            <Grip />
            <Tool $on aria-label="Cursor"><Cursor /></Tool>
            <Tool aria-label="Crosshair"><Icon>{lines.cross}</Icon></Tool>
            <Divider />
            <Tool aria-label="Vertical line"><Icon>{lines.vline}</Icon></Tool>
            <Tool aria-label="Horizontal line"><Icon>{lines.hline}</Icon></Tool>
            <Tool aria-label="Trend line"><Icon>{lines.slash}</Icon></Tool>
            <Tool aria-label="Channel"><Icon>{lines.channel}</Icon></Tool>
            <Tool aria-label="Fibonacci"><Icon>{lines.fibo}</Icon></Tool>
            <Tool aria-label="Text"><Icon><path d="M5.500 14.500L9 5l3.500 9.500M6.500 11.500h5" stroke="#555" strokeWidth="1.700" /></Icon></Tool>
            <Tool aria-label="Text label">
              <Icon>
                <rect x="2.500" y="2.500" width="13" height="13" stroke="#777" strokeDasharray="1 1" />
                <path d="M5.500 5.500h7M9 5.500V13M7.500 13h3M5.500 5v2M12.500 5v2" stroke="#444" />
              </Icon>
            </Tool>
            <DropTool aria-label="Arrows"><Icon>{lines.arrows}</Icon><Caret /></DropTool>
            <BandEnd $double />
            <Grip />
            {["M1", "M5", "M15", "M30", "H1", "H4", "D1", "W1", "MN"].map((t) => (
              <Tool key={t} $on={t === "M15"}>{t}</Tool>
            ))}
            <BandEnd />
            <Grip />
            <Tool aria-label="Bar chart"><AxisIcon><path d="M8.500 12V5M12.500 10V3M7 10.500h1.500M8.500 6.500H10M11 8.500h1.500M12.500 4.500H14" stroke="#1f8a26" /></AxisIcon></Tool>
            <Tool $on aria-label="Candlesticks"><AxisIcon><path d="M10 1v12" stroke="#0d6b14" /><rect x="8" y="3.500" width="4" height="7" fill="#2ebd2a" stroke="#0d6b14" /></AxisIcon></Tool>
            <Tool aria-label="Line chart"><AxisIcon><path d="M5 11c3-7 5-7 9-2" stroke="#1f8a26" strokeWidth="1.300" /></AxisIcon></Tool>
            <Divider />
            <Tool aria-label="Zoom in"><Magnifier sign="M7.500 4.500v5M5 7h5" color="#999" handle="#aaa" /></Tool>
            <Tool aria-label="Zoom out"><Magnifier sign="M5 7h5" color="#3c8fcb" handle="#dba03a" /></Tool>
            <Divider />
            <Tool $on aria-label="Auto scroll"><AxisIcon><path d="M8 5l5 3.500L8 12z" fill="#2fa72b" /></AxisIcon></Tool>
            <Tool $on aria-label="Chart shift"><AxisIcon><path d="M9 2v11" stroke="#2a64b0" strokeWidth="1.300" /><path d="M10 7.500l3-2.500v2h2.500v1H13v2z" fill="#cf3a1c" /></AxisIcon></Tool>
            <Divider />
            <DropTool aria-label="Indicators">
              <Icon>
                <path d="M5.500 1h8v12h-8z" fill="#eef6ee" stroke="#666" />
                <path d="M2.500 4h8v12h-8z" fill="#fff" stroke="#666" />
                <path d="M7.500 6.500C5.500 6 6.500 10 5.500 13M5 9.500h3" stroke="#444" />
                <Plus x={7} y={8} />
              </Icon>
              <Caret />
            </DropTool>
            <DropTool aria-label="Periods"><Clock /><Caret /></DropTool>
            <DropTool aria-label="Templates"><Indicators /><Caret /></DropTool>
            <BandEnd />
          </ToolBar>

          <ChartWindow>
            <Panes>
              <Pane>
                <Plot>
                  <Candles />
                  <PairColumns>
                    {matched.map((rows, i) => (
                      <PairColumn key={i} $color="#00ffff">
                        {rows.map((r) => <div key={r}>{pairRow(r, "Sto")}</div>)}
                      </PairColumn>
                    ))}
                    {opposed.map((rows, i) => (
                      <PairColumn key={i} $color="#ff0000">
                        {rows.map((r) => <div key={r}>{pairRow(r, "StoDiff")}</div>)}
                      </PairColumn>
                    ))}
                  </PairColumns>
                  <ScannerPanel />
                </Plot>
                <Scale>
                  {prices.map(([t, y]) => (
                    <ScaleLabel key={t} $y={y} $tick>{t}</ScaleLabel>
                  ))}
                  <BidLabel>133.242</BidLabel>
                </Scale>
              </Pane>
              {studies.map((s) => (
                <StudyPane key={s.name} study={s} />
              ))}
            </Panes>
            <Times>
              {times.map((t) => (
                <Time key={t}>{t}</Time>
              ))}
            </Times>
          </ChartWindow>

          <StatusBar>
            <StatusText>Pro pomoc, stisknìte F1</StatusText>
            <StatusCell $w={116}>Default</StatusCell>
            <StatusCell $w={102}>2011.02.10 07:45</StatusCell>
            <StatusCell $w={71}>O: 132.888</StatusCell>
            <StatusCell $w={71}>H: 132.938</StatusCell>
            <StatusCell $w={69}>L: 132.835</StatusCell>
            <StatusCell $w={69}>C: 132.867</StatusCell>
            <StatusCell $w={67}>V: 1039</StatusCell>
            <Traffic>
              <svg width="24" height="12" aria-hidden="true">
                {Array.from({ length: 8 }, (_, k) => (
                  <g key={k}>
                    <rect x={k * 3} y="0" width="2" height={9 - k} fill="#5d7a12" />
                    <rect x={k * 3} y={10 - k} width="2" height={2 + k} fill="#9c1c0c" />
                  </g>
                ))}
              </svg>
              9724/2 kb
            </Traffic>
          </StatusBar>
        </Window>
      </Desktop>
    </>
  );
}
